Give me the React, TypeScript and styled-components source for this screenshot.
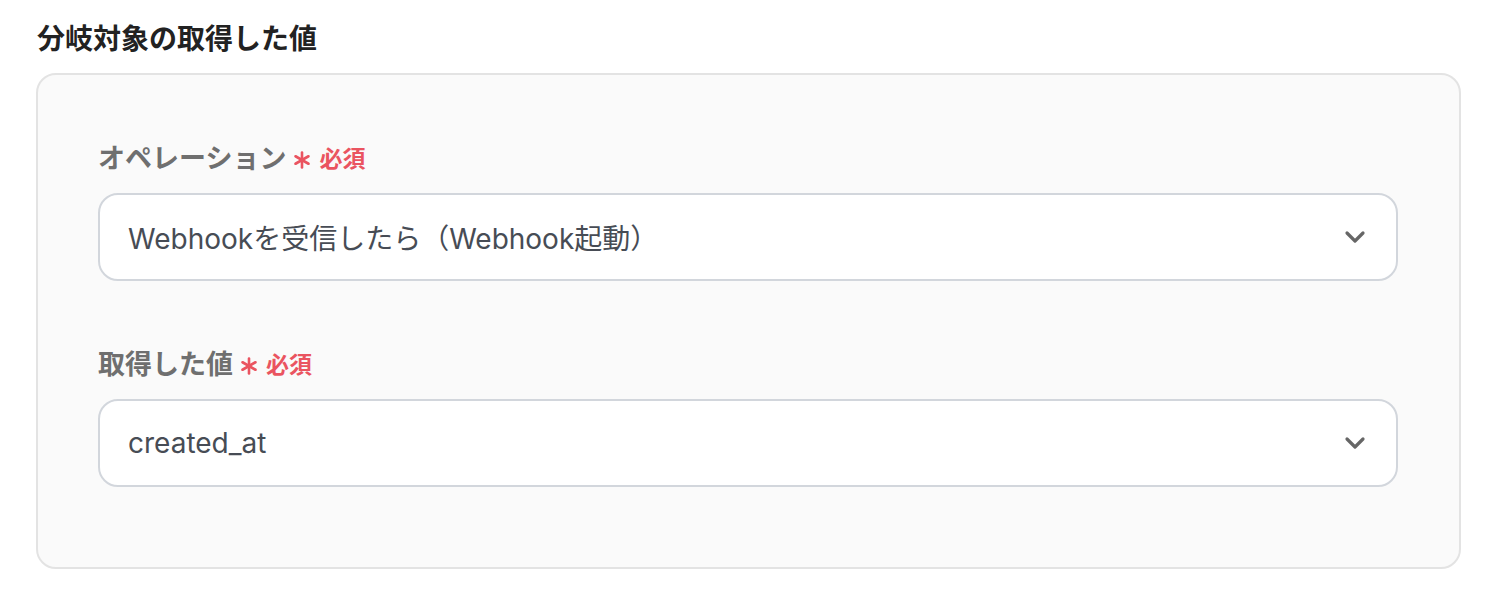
import React from "react";
import styled, { createGlobalStyle } from "styled-components";

const Global = createGlobalStyle`
  html, body { margin: 0; padding: 0; background: #ffffff; }
  body { font-family: "Inter", "Noto Sans CJK JP", sans-serif; }
`;

const Page = styled.div`
  padding: 18px 37px 0 36px;
`;

const Title = styled.h2`
  margin: 0 0 17px 1px;
  font-family: "Noto Sans CJK JP", sans-serif;
  font-size: 28px;
  line-height: 38px;
  font-weight: 700;
  color: #222222;
`;

const Panel = styled.section`
  background: #fafafa;
  border: 2px solid #e3e3e3;
  border-radius: 20px;
  padding: 64px 61px 80px 60px;
  display: flex;
  flex-direction: column;
  gap: 64px;
`;

const Field = styled.div`
  display: flex;
  flex-direction: column;
  gap: 18px;
`;

const Label = styled.div`
  display: flex;
  align-items: center;
  gap: 7px;
  font-family: "Noto Sans CJK JP", sans-serif;
  font-size: 27px;
  line-height: 36px;
  font-weight: 700;
  color: #6f6f6f;
`;

const Required = styled.span`
  display: inline-flex;
  align-items: center;
  gap: 8px;
  color: #ea5460;
  font-size: 23px;
  font-weight: 700;
`;

const Star = styled.svg`
  width: 18px;
  height: 18px;
  margin-top: 6px;
`;

const Select = styled.div`
  height: 84px;
  background: #ffffff;
  border: 2px solid #d2d6dc;
  border-radius: 20px;
  display: flex;
  align-items: center;
  justify-content: space-between;
  padding: 0 30px 0 28px;
  font-family: "Inter", "Noto Sans CJK JP", sans-serif;
  font-size: 28px;
  color: #474c55;
`;

const Chevron = styled.svg`
  width: 22px;
  height: 14px;
`;

const Asterisk = () => (
  <Star viewBox="0 0 18 18">
    <g stroke="#ea5460" strokeWidth="2.6" strokeLinecap="round">
      <line x1="9" y1="1.5" x2="9" y2="16.5" />
      <line x1="2.5" y1="5.25" x2="15.5" y2="12.75" />
      <line x1="2.5" y1="12.75" x2="15.5" y2="5.25" />
    </g>
  </Star>
);

const Down = () => (
  <Chevron viewBox="0 0 22 14">
    <path d="M3 3 L11 11 L19 3" fill="none" stroke="#666666" strokeWidth="3.2" strokeLinecap="round" strokeLinejoin="round" />
  </Chevron>
);

const fields = [
  { label: "オペレーション", value: "Webhookを受信したら（Webhook起動）" },
  { label: "取得した値", value: "created_at" },
];

export default function App() {
  return (
    <>
      <Global />
      <Page>
        <Title>分岐対象の取得した値</Title>
        <Panel>
          {fields.map((f) => (
            <Field key={f.label}>
              <Label>
                {f.label}
                <Required>
                  <Asterisk />
                  必須
                </Required>
              </Label>
              <Select>
                <span>{f.value}</span>
                <Down />
              </Select>
            </Field>
          ))}
        </Panel>
      </Page>
    </>
  );
}
